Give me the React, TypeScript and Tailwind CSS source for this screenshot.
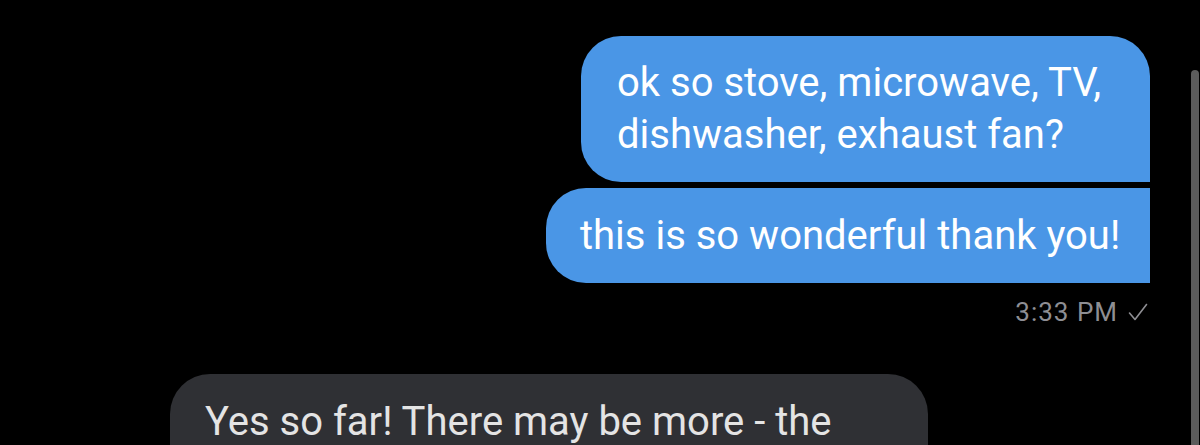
export default function App() {
  return (
    <div className="flex h-[445px] w-[1200px] overflow-hidden bg-black font-['Roboto',sans-serif]">
      {/* Thread */}
      <div className="flex flex-1 flex-col pt-[36px]">
        <div className="flex flex-col items-end gap-[6px] pr-[41px]">
          <div className="flex h-[146px] w-[569px] flex-col justify-center rounded-[40px] rounded-br-none bg-[#4a96e6] pl-[36px] text-[40px] leading-[52px] text-white">
            <span className="whitespace-nowrap">ok so stove, microwave, TV,</span>
            <span className="whitespace-nowrap">dishwasher, exhaust fan?</span>
          </div>
          <div className="flex h-[95px] w-[604px] items-center rounded-l-[40px] bg-[#4a96e6] pl-[34px] text-[40px] leading-[52px] text-white">
            <span className="whitespace-nowrap">this is so wonderful thank you!</span>
          </div>
          <div className="mt-[8px] flex items-center gap-[10px] pr-[2px] text-[26px] leading-[30px] tracking-[1px] text-[#8e8e93]">
            <span>3:33 PM</span>
            <svg width="20" height="18" viewBox="0 0 20 18" fill="none">
              <path d="M1.5 10 L7 16.5 L18.5 1.5" stroke="#8e8e93" strokeWidth="1.6" strokeLinecap="round" strokeLinejoin="round" />
            </svg>
          </div>
        </div>
        <div className="mt-[47px] pl-[170px]">
          <div className="h-[120px] w-[758px] rounded-t-[40px] bg-[#2f3034] px-[35px] pt-[24px] text-[40px] leading-[48px] whitespace-nowrap text-[#e4e4e4]">
            Yes so far! There may be more - the
          </div>
        </div>
      </div>
      {/* Scrollbar */}
      <div className="flex w-[9px] flex-col pt-[70px]">
        <div className="w-[8px] flex-1 rounded-t-full bg-[#5c5c5c]" />
      </div>
    </div>
  )
}
